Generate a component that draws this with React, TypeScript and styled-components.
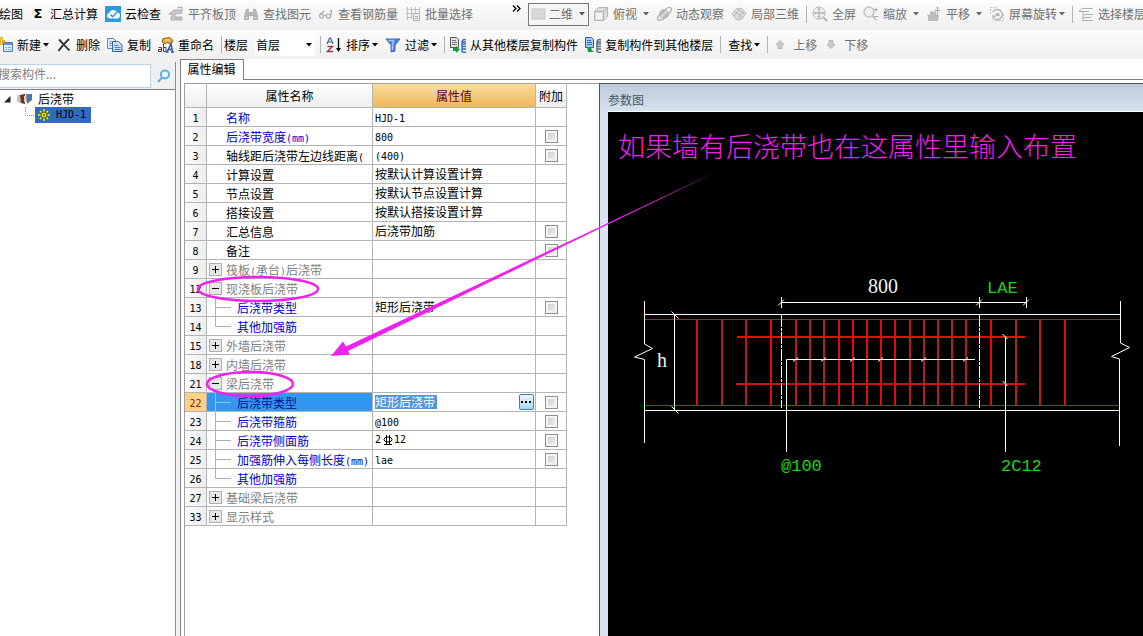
import React from "react";
import styled, { createGlobalStyle, css } from "styled-components";

const uiFont = `"Noto Sans CJK SC", "Liberation Sans", sans-serif`;
const magenta = "#f020f0";

const GlobalStyle = createGlobalStyle`
  * { box-sizing: border-box; }
  html, body { margin: 0; padding: 0; }
  body { font: 12px/16px ${uiFont}; color: #000; background: #fff; overflow: hidden; }
  button, input, select { font: inherit; color: inherit; margin: 0; }
`;

/* ---------- frame ---------- */

const Page = styled.div`
  position: relative;
  display: flex;
  flex-direction: column;
  min-height: 100vh;
  overflow: hidden;
`;

const Bar = styled.div<{ $tall?: boolean }>`
  display: flex;
  align-items: center;
  gap: 7px;
  height: ${(p) => (p.$tall ? 30 : 29)}px;
  margin-left: -3px;
  padding-bottom: ${(p) => (p.$tall ? 2 : 0)}px;
  background: linear-gradient(#fcfcfc, #efefef);
  white-space: nowrap;
  overflow: hidden;
`;

const LeadGroup = styled.div`
  display: flex;
  align-items: center;
  flex: none;
  gap: 7px;
  width: 508px;
`;

const ToolButton = styled.button<{ $muted?: boolean; $plain?: boolean }>`
  display: flex;
  align-items: center;
  flex: none;
  gap: 4px;
  padding: 0 0 0 ${(p) => (p.$plain ? 2 : 0)}px;
  border: 0;
  background: none;
  white-space: nowrap;
  color: ${(p) => (p.$muted ? "#707070" : "#000")};
`;

const IconSlot = styled.span`
  display: flex;
  align-items: center;
  justify-content: center;
  flex: none;
  width: 16px;
  height: 16px;
`;

const SigmaMark = styled.span`
  font: bold 13px/16px "DejaVu Sans", sans-serif;
`;

const Divider = styled.span`
  flex: none;
  width: 1px;
  height: 17px;
  margin-right: -2px;
  background: #b4b4b4;
`;

const ArrowSlot = styled.span<{ $wide?: boolean }>`
  display: flex;
  justify-content: flex-end;
  width: ${(p) => (p.$wide ? 8 : 6)}px;
  margin-left: ${(p) => (p.$wide ? 0 : -2)}px;
`;

const MoreButton = styled.button`
  display: flex;
  align-self: flex-start;
  flex: none;
  width: 9px;
  padding: 5px 0 0;
  border: 0;
  background: none;
`;

const SelectBox = styled.span<{ $framed?: boolean }>`
  display: grid;
  align-items: center;
  flex: none;
  width: ${(p) => (p.$framed ? 61 : 60)}px;
  height: 23px;
  background: #fff;
  ${(p) =>
    p.$framed &&
    css`
      margin-right: -3px;
      background: #f4f4f4;
      border: 1px solid #777;
      color: #707070;
    `}
  > * { grid-area: 1 / 1; }
  > svg { pointer-events: none; }
  > svg:last-child { justify-self: end; margin-right: 3px; }
  > svg:first-child { margin-left: 2px; }
`;

const Select = styled.select<{ $indent: number }>`
  appearance: none;
  width: 100%;
  height: 20px;
  padding: 0 0 0 ${(p) => p.$indent}px;
  border: 0;
  background: none;
`;

const Field = styled.label`
  display: flex;
  align-items: center;
  flex: none;
  gap: 7px;
  margin: 0 -2px 0 -3px;
`;

const Workspace = styled.div`
  display: flex;
  flex: 1;
  background: #f0f0f0;
`;

/* ---------- component tree ---------- */

const Side = styled.aside`
  display: flex;
  flex-direction: column;
  flex: none;
  width: 176px;
  margin-top: 3px;
  border-right: 1px solid #8c8c8c;
`;

const SearchRow = styled.form`
  display: flex;
  align-items: center;
  gap: 6px;
  height: 27px;
`;

const SearchInput = styled.input`
  width: 154px;
  height: 24px;
  margin-left: -3px;
  padding: 0 0 4px;
  border: 1px solid #b9d4e6;
  background: #fff;
  outline: 0;
  &::placeholder { color: #808080; opacity: 1; }
`;

const SearchButton = styled.button`
  display: flex;
  padding: 0;
  border: 0;
  background: none;
`;

const Tree = styled.ul`
  flex: 1;
  margin: 0;
  padding: 1px 0 0;
  border-top: 1px solid #808080;
  background: #fff;
  list-style: none;
`;

const TreeRow = styled.li<{ $child?: boolean }>`
  display: flex;
  align-items: center;
  gap: ${(p) => (p.$child ? 0 : 5)}px;
  height: 16px;
  padding-left: ${(p) => (p.$child ? 25 : 4)}px;
`;

const TreeSelected = styled.span`
  display: flex;
  align-items: center;
  gap: 6px;
  height: 16px;
  padding: 0 5px 0 3px;
  background: #316ac5;
`;

/* ---------- property editor ---------- */

const Editor = styled.main`
  display: flex;
  flex-direction: column;
  flex: 1;
  min-width: 0;
  margin-left: 4px;
  border-left: 1px solid #808080;
  background: #fff;
`;

const TabStrip = styled.div`
  display: flex;
  height: 21px;
  &::after {
    content: "";
    flex: 1;
    border-bottom: 1px solid #808080;
  }
`;

const Tab = styled.button`
  width: 63px;
  padding: 0 1px 2px 0;
  border: 1px solid #808080;
  border-width: 1px 1px 0 0;
  background: #fff;
`;

const Panes = styled.div`
  display: flex;
  flex: 1;
  padding: 3px 0 0 3px;
`;

const GridPane = styled.section`
  flex: none;
  width: 415px;
  border: 1px solid #a0a0a0;
  border-width: 1px 0 0 1px;
`;

const Table = styled.table`
  width: 382px;
  table-layout: fixed;
  border-spacing: 0;
  th, td {
    padding: 0;
    border: 1px solid #b4b4b4;
    border-width: 0 1px 1px 0;
    font-weight: normal;
    white-space: nowrap;
  }
  thead th { height: 24px; background: linear-gradient(#fff, #eee); }
`;

const HeadCell = styled.th<{ $active?: boolean }>`
  ${(p) =>
    p.$active &&
    css`
      && { background: linear-gradient(#f9dc9c, #efb95a); }
      color: #600030;
    `}
`;

const NumberCell = styled.th<{ $active?: boolean }>`
  background: ${(p) => (p.$active ? "#ffd08a" : "linear-gradient(90deg, #fdfdfd, #ededed)")};
  color: ${(p) => (p.$active ? "#7a2800" : "#000")};
`;

const CellRow = styled.div<{ $tone?: string; $active?: boolean; $lowered?: boolean }>`
  display: flex;
  align-items: center;
  height: 18px;
  padding-left: 2px;
  overflow: hidden;
  color: ${(p) => p.$tone ?? "#000"};
  background: ${(p) => (p.$active ? "#3396f0" : "none")};
`;

const NameText = styled.span`
  padding-top: 1px;
`;

const Latin = styled.span`
  font: 10px/10px "DejaVu Sans Mono", monospace;
  white-space: pre;
`;

const Gutter = styled.span<{ $deep?: boolean }>`
  display: flex;
  align-items: center;
  flex: none;
  width: ${(p) => (p.$deep ? 28 : 17)}px;
  height: 18px;
`;

const Toggle = styled.button`
  display: flex;
  align-items: center;
  justify-content: center;
  width: 13px;
  height: 13px;
  padding: 0;
  border: 1px solid #b0b0b0;
  background: #e6e6e6;
`;

const Check = styled.input`
  display: block;
  appearance: none;
  width: 13px;
  height: 13px;
  margin: 1px auto 0;
  border: 1px solid #8e8f8f;
  background: linear-gradient(135deg, #c4c8cc, #f6f6f6);
  box-shadow: inset 0 0 0 2px #f4f4f4;
`;

const ValueInput = styled.input`
  width: 62px;
  height: 14px;
  padding: 0;
  border: 0;
  outline: 0;
  background: #5096d8;
  color: #fff;
`;

const BrowseButton = styled.button`
  display: flex;
  align-items: center;
  justify-content: center;
  width: 15px;
  height: 16px;
  margin: 0 1px 0 auto;
  padding: 0;
  border: 1px solid #3c7fb1;
  border-radius: 2px;
  background: linear-gradient(#eaf6fd, #a7d9f5);
`;

/* ---------- parameter drawing ---------- */

const DiagramPane = styled.section`
  display: flex;
  flex-direction: column;
  flex: 1;
  min-width: 0;
  padding-left: 8px;
  border: 1px solid #4d5866;
  border-width: 1px 0 0 1px;
  background: linear-gradient(#bccadb, #d5e3f0 28px, #dbe3f1 29px);
`;

const DiagramTitle = styled.h2`
  height: 28px;
  margin: 0;
  padding-top: 8px;
  border-bottom: 1px solid #fff;
  font: inherit;
  color: #4c5864;
`;

const Canvas = styled.div`
  flex: 1;
  overflow: hidden;
  background: #000;
  svg { display: block; }
`;

const Overlay = styled.svg`
  position: absolute;
  top: 0;
  left: 0;
  overflow: visible;
  pointer-events: none;
`;

/* ---------- icons ---------- */

const Svg = ({ w = 16, h = 16, children }: { w?: number; h?: number; children: React.ReactNode }) => (
  <svg width={w} height={h} viewBox={`0 0 ${w} ${h}`} fill="none" aria-hidden="true">
    {children}
  </svg>
);

const Caret = ({ color = "#000" }: { color?: string }) => (
  <Svg w={6} h={4}>
    <path d="M0 0h6L3 3.5z" fill={color} />
  </Svg>
);

const icons = {
  sigma: <SigmaMark>Σ</SigmaMark>,
  cloud: (
    <Svg>
      <rect width="16" height="16" fill="#2f9ad8" />
      <path d="M4.5 12.5a2.8 2.8 0 0 1-.3-5.5 4 4 0 0 1 7.6-.6 3 3 0 0 1 .2 6.1z" fill="#fff" />
      <path d="M5.5 8.6l2.2 2.2 4-4.2" stroke="#2f9ad8" strokeWidth="1.5" />
    </Svg>
  ),
  align: (
    <Svg>
      <path d="M1 8l5-4h8v3l-7 1v3h7v3H3v-3l2-2z" fill="#c9c9c9" stroke="#b0b0b0" />
      <path d="M9 2l5-1v3M6 12h6" stroke="#a8a8a8" />
    </Svg>
  ),
  binoculars: (
    <Svg>
      <path d="M3 3h3v3h4V3h3l2 7v4h-5v-4H6v4H1v-4z" fill="#b5b5b5" />
      <path d="M2.5 11.5h2M11.5 11.5h2M4 2h2M10 2h2" stroke="#e8e8e8" />
    </Svg>
  ),
  glasses: (
    <Svg>
      <circle cx="3.500" cy="10" r="2" stroke="#b0b0b0" strokeWidth="1.300" />
      <circle cx="10.500" cy="10" r="2.200" stroke="#b0b0b0" strokeWidth="1.300" />
      <path d="M5.500 9.500h3M2 8.500l4.500-4M12.700 10l1-5.500-2 .5" stroke="#b0b0b0" strokeWidth="1.200" />
    </Svg>
  ),
  batch: (
    <Svg>
      <path d="M1 3.500h13M1 7.500h7M1 11.500h6M2.500 1v13M6.500 1v12M10.500 1v6M14.500 1v6" stroke="#c0c0c0" />
      <path d="M8.500 7.500h6v7h-6zM10 10.500h3M10 12.500h3" stroke="#b0b0b0" fill="#eee" />
    </Svg>
  ),
  cube: (
    <Svg>
      <path d="M1.500 5.500l4-4h9v9l-4 4h-9z" fill="#dcdcdc" stroke="#b4b4b4" />
      <path d="M1.500 5.500h9v9M10.500 5.500l4-4" stroke="#b4b4b4" />
      <path d="M3 7h6v6H3z" fill="#f4f4f4" />
    </Svg>
  ),
  orbit: (
    <Svg>
      <circle cx="8" cy="8" r="5" fill="#c4c4c4" />
      <path d="M2 14C-1 11 12-1 15 2S5 16 2 14z" stroke="#b4b4b4" strokeWidth="1.400" />
      <path d="M5 11l6-6" stroke="#eee" />
    </Svg>
  ),
  local3d: (
    <Svg>
      <path d="M1 8l4-5 5-1 5 5-4 6-5 1z" fill="#dedede" stroke="#b8b8b8" />
      <path d="M3 10l5-6M7 12l5-7M4 6l7 5M7 3l6 5" stroke="#b8b8b8" />
    </Svg>
  ),
  fullscreen: (
    <Svg>
      <circle cx="7" cy="7" r="6" stroke="#b0b0b0" fill="#f4f4f4" />
      <path d="M7 2.500v9M2.500 7h9M5.500 4L7 2.500 8.500 4M5.500 10L7 11.500 8.500 10M4 5.500L2.500 7 4 8.500M10 5.500L11.500 7 10 8.500" stroke="#a4a4a4" />
      <path d="M11.500 11.500l3.500 3.500" stroke="#b0b0b0" strokeWidth="2" />
    </Svg>
  ),
  zoom: (
    <Svg>
      <circle cx="6" cy="6" r="5" stroke="#c4c4c4" fill="#f0f0f0" strokeWidth="1.500" />
      <path d="M9.500 9.500L13 14" stroke="#c0c0c0" strokeWidth="2" />
      <path d="M11 3.500h4M13 1.500v4M11.500 10.500h4" stroke="#aaa" />
    </Svg>
  ),
  pan: (
    <Svg>
      <path d="M2 15v-4l-1-3 3 1V6l2-1 2 1 2-1v3l3 1-1 6z" fill="#bcbcbc" />
      <path d="M11.500 1v7M8.500 4.500h6M10 2.500L11.500 1 13 2.500" stroke="#b0b0b0" />
    </Svg>
  ),
  rotate: (
    <Svg>
      <path d="M1.500 8V1.500H8M14.500 8v6.500H5" stroke="#c4c4c4" strokeDasharray="2 1" />
      <path d="M4 6a5 5 0 1 1 2 7" stroke="#bcbcbc" strokeWidth="1.800" />
      <path d="M3 9l4 1-3 4zM6.500 7h4v3h-4z" fill="#bbb" />
    </Svg>
  ),
  floors: (
    <Svg>
      <path d="M5 2.500h10M4 5.500h7M5 8.500h10M5 11.500h8M4 14.500h11M4.500 2L1 5.500h4v9" stroke="#b0b0b0" />
    </Svg>
  ),
  create: (
    <Svg>
      <path d="M6.500 5.500h9v9h-9z" fill="#e6f0fb" stroke="#4a78b4" />
      <path d="M7 6h8v2H7z" fill="#5d92d8" />
      <path d="M8 10.500h2M11 10.500h3M8 12.500h2M11 12.500h3" stroke="#7ba3d4" />
      <path d="M4.500 0v8M.500 4.500h8" stroke="#dba500" strokeWidth="2.500" />
      <path d="M4.500 1v6" stroke="#ffe84a" />
    </Svg>
  ),
  remove: (
    <Svg>
      <path d="M3 2.500c3 3 7 7.500 10.500 11M13 2C9 6 5.500 9.500 2.500 14" stroke="#333" strokeWidth="1.800" />
    </Svg>
  ),
  copy: (
    <Svg>
      <path d="M.500 1.500h6l3 3v7h-9z" fill="#e4eefa" stroke="#5a86c0" />
      <path d="M5.500 4.500h6l3.500 3.500v6.500h-9.500z" fill="#cfe0f6" stroke="#2f64ac" />
      <path d="M7.500 8.500h4M7.500 10.500h6M7.500 12.500h6M2.500 4.500h2M2.500 6.500h2M2.500 8.500h2" stroke="#4f7fc0" />
    </Svg>
  ),
  rename: (
    <Svg>
      <path d="M5 1.500l7-1 3 3-2 4-4-2-2 1.500-3-2z" fill="#dba53c" stroke="#8b6420" />
      <path d="M7 3h5" stroke="#fff0b0" />
      <path d="M.500 10.500h3v4h-3v-2h3M5.500 7v7.500h2.500v-4h-2.500" stroke="#444" />
      <path d="M9 15l4-8 1.500 8M10.500 12.500h4M8 15h2.500M13 15h3" stroke="#2457a8" strokeWidth="1.400" />
    </Svg>
  ),
  sort: (
    <Svg>
      <path d="M1 7l2.500-6h1L7 7M2 5h4" stroke="#3a62b4" strokeWidth="1.200" />
      <path d="M1.500 9.500H6.500L1.500 14.500h5.500" stroke="#a03848" strokeWidth="1.400" />
      <path d="M12.500 1v12" stroke="#111" strokeWidth="1.400" />
      <path d="M10 11h5l-2.500 4z" fill="#111" />
    </Svg>
  ),
  filter: (
    <Svg>
      <path d="M1 2h14l-5 6v6l-4 1V8z" fill="#4a84e0" stroke="#3a68b8" />
      <path d="M3.500 3.500h5L7.500 8v5" stroke="#a8c8f8" strokeWidth="1.500" />
    </Svg>
  ),
  copyFrom: (
    <Svg>
      <path d="M.500.500h6l2 2v8h-8z" fill="#e4e4e4" stroke="#555" />
      <path d="M2 3.500h4M2 5.500h5M2 7.500h5" stroke="#777" />
      <path d="M3 11h3v-2l4 3.500L6 16v-2H3z" fill="#1a9c40" />
      <path d="M16 3c-2-1-4 0-4 2v9c0 1 2 2 4 1M12 7h4M12 9.500h4M12 12h4M12 5h4" stroke="#2e6fc0" strokeWidth="1.500" />
    </Svg>
  ),
  copyTo: (
    <Svg>
      <path d="M.500.500h6l2 2v8h-8z" fill="#a8ccf8" stroke="#2458b0" />
      <path d="M2 3.500h4M2 5.500h5M2 7.500h5" stroke="#2e6fc0" />
      <path d="M2 10l6 0-2 2 3 3H3z" fill="#1a9c40" />
      <path d="M16 3c-2-1-4 0-4 2v9c0 1 2 2 4 1M12 7h4M12 9.500h4M12 12h4M12 5h4" stroke="#5c6c7c" strokeWidth="1.500" />
    </Svg>
  ),
  up: (
    <Svg>
      <path d="M7 3.500l4 4H9v4H5v-4H3z" fill="#c8c8c8" stroke="#b8b8b8" />
    </Svg>
  ),
  down: (
    <Svg>
      <path d="M7 11.500l4-4H9v-4H5v4H3z" fill="#c8c8c8" stroke="#b8b8b8" />
    </Svg>
  ),
};

type IconName = keyof typeof icons;

interface ToolProps {
  icon?: IconName;
  label: string;
  muted?: boolean;
  arrow?: "wide" | "tight";
}

const Tool = ({ icon, label, muted, arrow }: ToolProps) => (
  <ToolButton type="button" $muted={muted} $plain={!icon}>
    {icon && <IconSlot>{icons[icon]}</IconSlot>}
    {label}
    {arrow && (
      <ArrowSlot $wide={arrow === "wide"}>
        <Caret color={muted ? "#666" : "#000"} />
      </ArrowSlot>
    )}
  </ToolButton>
);

/* Runs of ASCII are set in the half-width face, the rest in the CJK face. */
const Mixed = ({ text }: { text: string }) => (
  <span>
    {text.split(/([\x20-\x7e]+)/).map((part, i) => (i % 2 ? <Latin key={i}>{part}</Latin> : part))}
  </span>
);

/* ---------- data ---------- */

type Kind = "item" | "closed" | "open" | "child" | "last";

interface Row {
  no: number;
  name: string;
  value?: string;
  kind?: Kind;
  key?: boolean;
  check?: boolean;
}

const rows: Row[] = [
  { no: 1, name: "名称", value: "HJD-1", key: true },
  { no: 2, name: "后浇带宽度(mm)", value: "800", key: true, check: true },
  { no: 3, name: "轴线距后浇带左边线距离(", value: "(400)", check: true },
  { no: 4, name: "计算设置", value: "按默认计算设置计算" },
  { no: 5, name: "节点设置", value: "按默认节点设置计算" },
  { no: 6, name: "搭接设置", value: "按默认搭接设置计算" },
  { no: 7, name: "汇总信息", value: "后浇带加筋", check: true },
  { no: 8, name: "备注", check: true },
  { no: 9, name: "筏板(承台)后浇带", kind: "closed" },
  { no: 12, name: "现浇板后浇带", kind: "open" },
  { no: 13, name: "后浇带类型", value: "矩形后浇带", kind: "child", check: true },
  { no: 14, name: "其他加强筋", kind: "last" },
  { no: 15, name: "外墙后浇带", kind: "closed" },
  { no: 18, name: "内墙后浇带", kind: "closed" },
  { no: 21, name: "梁后浇带", kind: "open" },
  { no: 22, name: "后浇带类型", value: "矩形后浇带", kind: "child", check: true },
  { no: 23, name: "后浇带箍筋", value: "@100", kind: "child", check: true },
  { no: 24, name: "后浇带侧面筋", value: "2#12", kind: "child", check: true },
  { no: 25, name: "加强筋伸入每侧长度(mm)", value: "lae", kind: "child", check: true },
  { no: 26, name: "其他加强筋", kind: "last" },
  { no: 27, name: "基础梁后浇带", kind: "closed" },
  { no: 33, name: "显示样式", kind: "closed" },
];

const ACTIVE_ROW = 22;

const RebarSign = () => (
  <svg width="13" height="12" viewBox="0 0 13 12" fill="none" stroke="#000" aria-label="HRB400">
    <path d="M5.500 1v9M8.500 1v9M3 10.500h8" />
    <ellipse cx="7" cy="5.500" rx="4" ry="2.500" />
  </svg>
);

const nameTone = (row: Row, active: boolean) => {
  if (active) return "#04108c";
  if (row.kind === "closed" || row.kind === "open") return "#808080";
  return row.key || row.kind ? "#0000c8" : "#000";
};

const RowGutter = ({ kind = "item", active }: { kind?: Kind; active: boolean }) => {
  if (kind === "child" || kind === "last") {
    return (
      <Gutter $deep>
        <svg width="28" height="18" fill="none" stroke={active ? "#8ec4f8" : "#b0b0b0"}>
          <path d={kind === "last" ? "M6.500 0v9.500H22" : "M6.500 0v18M6.500 9.500H22"} />
        </svg>
      </Gutter>
    );
  }
  return (
    <Gutter>
      {kind !== "item" && (
        <Toggle type="button" aria-label={kind === "open" ? "折叠" : "展开"}>
          <Svg w={9} h={9}>
            <path d={kind === "open" ? "M1 4.500h7" : "M1 4.500h7M4.500 1v7"} stroke="#000" />
          </Svg>
        </Toggle>
      )}
    </Gutter>
  );
};

const ValueContent = ({ row }: { row: Row }) => {
  if (row.no === ACTIVE_ROW) {
    return (
      <>
        <ValueInput aria-label={row.name} defaultValue={row.value} />
        <BrowseButton type="button" aria-label="选择">
          <Svg w={11} h={4}>
            <path d="M0 1h2v2H0zM4 1h2v2H4zM8 1h2v2H8z" fill="#000" />
          </Svg>
        </BrowseButton>
      </>
    );
  }
  if (row.value?.includes("#")) {
    const [count, size] = row.value.split("#");
    return (
      <>
        <Latin>{count}</Latin>
        <RebarSign />
        <Latin>{size}</Latin>
      </>
    );
  }
  return <Mixed text={row.value ?? ""} />;
};

const PropertyTable = () => (
  <Table>
    <colgroup>
      <col width={22} />
      <col width={166} />
      <col width={163} />
      <col width={31} />
    </colgroup>
    <thead>
      <tr>
        <th />
        <HeadCell scope="col">属性名称</HeadCell>
        <HeadCell scope="col" $active>属性值</HeadCell>
        <HeadCell scope="col">附加</HeadCell>
      </tr>
    </thead>
    <tbody>
      {rows.map((row) => {
        const active = row.no === ACTIVE_ROW;
        return (
          <tr key={row.no}>
            <NumberCell scope="row" $active={active}>
              <Latin>{row.no}</Latin>
            </NumberCell>
            <td>
              <CellRow $tone={nameTone(row, active)} $active={active}>
                <RowGutter kind={row.kind} active={active} />
                <NameText>
                  <Mixed text={row.name} />
                </NameText>
              </CellRow>
            </td>
            <td>
              <CellRow>
                <ValueContent row={row} />
              </CellRow>
            </td>
            <td>{row.check && <Check type="checkbox" aria-label={`${row.name} 附加`} />}</td>
          </tr>
        );
      })}
    </tbody>
  </Table>
);

/* ---------- section drawing ---------- */

const bars = [697, 722, 746, 771, 796, 810, 824, 839, 853, 867, 881, 895, 910, 924, 938, 952, 966, 991, 1016, 1040, 1065];
const brightBars = [697, 771, 839, 853, 867, 881, 895, 991, 1065];
const spacingTicks = [796, 824, 853, 881, 924, 966];
const dimTicks = [781, 979, 1026];

const mono = `"Liberation Mono", monospace`;

const SectionDrawing = () => (
  <svg width="535" height="524" viewBox="608 112 535 524" fill="none" aria-label="参数图">
    <g stroke="#c01c1c">
      <path d="M644 319.500H1120M644 405.500H1120" />
      {bars.map((x) => (
        <path key={x} d={`M${x} 320V405`} strokeWidth="2" stroke={brightBars.includes(x) ? "#e00c0c" : "#b81c20"} />
      ))}
      <path d="M737 337H1025" stroke="#e80c0c" strokeWidth="2" />
      <path d="M736 384H1025" stroke="#c81418" strokeWidth="2" />
    </g>
    <g stroke="#fff">
      <path d="M644 314.500H1120M644 410.500H1120" />
      <path d="M644.500 301V344L652.500 348.500L634.500 357L644.500 359.500V443" />
      <path d="M1120.500 301V343L1129.500 347.500L1111.500 356.500L1119.500 359V446" />
      <path d="M674.500 314V410M671.500 311.500l7 7M671.500 406.500l7 7" />
      <path d="M781.500 315V408M979.500 315V408" strokeDasharray="12 1 3 1" />
      <path d="M781 302.500H1026" />
      {dimTicks.map((x) => (
        <path key={x} d={`M${x + 0.5} 297V308M${x - 3} 305.500l6-6`} />
      ))}
      <path d="M786.500 452V359.500H975" />
      {spacingTicks.map((x) => (
        <path key={x} d={`M${x - 3} 361.500l5-4`} />
      ))}
      <path d="M1005.500 336V452M1002.500 334l5 5M1002.500 381l5 5" />
    </g>
    <g fontFamily={mono} fontSize="17" fill="#18d818">
      <text x="987" y="293">LAE</text>
      <text x="781" y="471">@100</text>
      <text x="1001" y="471">2C12</text>
    </g>
    <g fontFamily={`"Liberation Serif", serif`} fontSize="20" fill="#f0f0f0">
      <text x="868" y="293">800</text>
      <text x="657" y="367">h</text>
    </g>
  </svg>
);

export default function App() {
  return (
    <Page>
      <GlobalStyle />
      <Bar $tall role="toolbar">
        <LeadGroup>
          <Tool label="绘图" />
          <Tool icon="sigma" label="汇总计算" />
          <Tool icon="cloud" label="云检查" />
          <Tool icon="align" label="平齐板顶" muted />
          <Tool icon="binoculars" label="查找图元" muted />
          <Tool icon="glasses" label="查看钢筋量" muted />
          <Tool icon="batch" label="批量选择" muted />
        </LeadGroup>
        <MoreButton type="button" aria-label="更多">
          <Svg w={9} h={7}>
            <path d="M1 .500l3 3-3 3M5 .500l3 3-3 3" stroke="#000" strokeWidth="1.300" />
          </Svg>
        </MoreButton>
        <SelectBox $framed>
          <Svg>
            <path d="M1 3h13v10H1z" fill="#d8d8d8" stroke="#c8c8c8" />
          </Svg>
          <Select $indent={20} aria-label="视图">
            <option>二维</option>
          </Select>
          <Caret color="#555" />
        </SelectBox>
        <Tool icon="cube" label="俯视" muted arrow="wide" />
        <Tool icon="orbit" label="动态观察" muted />
        <Tool icon="local3d" label="局部三维" muted />
        <Divider />
        <Tool icon="fullscreen" label="全屏" muted />
        <Tool icon="zoom" label="缩放" muted arrow="wide" />
        <Tool icon="pan" label="平移" muted arrow="wide" />
        <Tool icon="rotate" label="屏幕旋转" muted arrow="tight" />
        <Divider />
        <Tool icon="floors" label="选择楼层" muted />
      </Bar>
      <Bar role="toolbar">
        <Tool icon="create" label="新建" arrow="tight" />
        <Tool icon="remove" label="删除" />
        <Tool icon="copy" label="复制" />
        <Tool icon="rename" label="重命名" />
        <Divider />
        <Field>
          楼层
          <SelectBox>
            <Select $indent={1}>
              <option>首层</option>
            </Select>
            <Caret />
          </SelectBox>
        </Field>
        <Divider />
        <Tool icon="sort" label="排序" arrow="tight" />
        <Tool icon="filter" label="过滤" arrow="tight" />
        <Divider />
        <Tool icon="copyFrom" label="从其他楼层复制构件" />
        <Tool icon="copyTo" label="复制构件到其他楼层" />
        <Divider />
        <Tool label="查找" arrow="tight" />
        <Divider />
        <Tool icon="up" label="上移" muted />
        <Tool icon="down" label="下移" muted />
      </Bar>
      <Workspace>
        <Side>
          <SearchRow>
            <SearchInput type="search" placeholder="搜索构件..." aria-label="搜索构件" />
            <SearchButton type="button" aria-label="搜索">
              <Svg w={14} h={14}>
                <circle cx="8" cy="5.500" r="4" stroke="#5caee0" strokeWidth="2" fill="#eef8ff" />
                <path d="M5 8.500L1 13" stroke="#5caee0" strokeWidth="2" />
              </Svg>
            </SearchButton>
          </SearchRow>
          <Tree>
            <TreeRow>
              <Svg w={7} h={7}>
                <path d="M6.500 0v6.500H0z" fill="#222" />
              </Svg>
              <Svg w={17} h={12}>
                <path d="M1 2h5v8H3L1 8z" fill="#c9c4c0" />
                <path d="M4 2l5-1v10l-4-1z" fill="#6b3324" />
                <path d="M8 3h3v6H8z" fill="#e8c8a8" />
                <path d="M10 1h6v6l-5 4z" fill="#4d76a8" />
              </Svg>
              后浇带
            </TreeRow>
            <TreeRow $child>
              <Svg w={10} h={16}>
                <path d="M.500 0v8.500H10" stroke="#888" strokeDasharray="1 1" />
              </Svg>
              <TreeSelected>
                <Svg w={12} h={12}>
                  <path d="M6 0v12M0 6h12M2 2l8 8M10 2l-8 8" stroke="#f4f000" strokeWidth="1.500" />
                  <circle cx="6" cy="6" r="3" fill="#f4f000" stroke="#4a4a00" />
                  <circle cx="6" cy="6" r="1" fill="#4a4a00" />
                </Svg>
                <Latin>HJD-1</Latin>
              </TreeSelected>
            </TreeRow>
          </Tree>
        </Side>
        <Editor>
          <TabStrip role="tablist">
            <Tab type="button" role="tab" aria-selected="true">属性编辑</Tab>
          </TabStrip>
          <Panes>
            <GridPane>
              <PropertyTable />
            </GridPane>
            <DiagramPane>
              <DiagramTitle>参数图</DiagramTitle>
              <Canvas>
                <SectionDrawing />
              </Canvas>
            </DiagramPane>
          </Panes>
        </Editor>
      </Workspace>
      <Overlay width="1143" height="636" fill="none">
        <ellipse cx="258" cy="289" rx="60" ry="12" stroke={magenta} strokeWidth="2.500" />
        <ellipse cx="250" cy="384" rx="43" ry="12" stroke={magenta} strokeWidth="2.500" />
        <path d="M718 171L346 346.500L343 341.500L331 356L350 354.500L348 351Z" fill={magenta} />
        <text x="618" y="157" fontSize="27" fontWeight="300" fontFamily={uiFont} fill={magenta}>
          如果墙有后浇带也在这属性里输入布置
        </text>
      </Overlay>
    </Page>
  );
}
